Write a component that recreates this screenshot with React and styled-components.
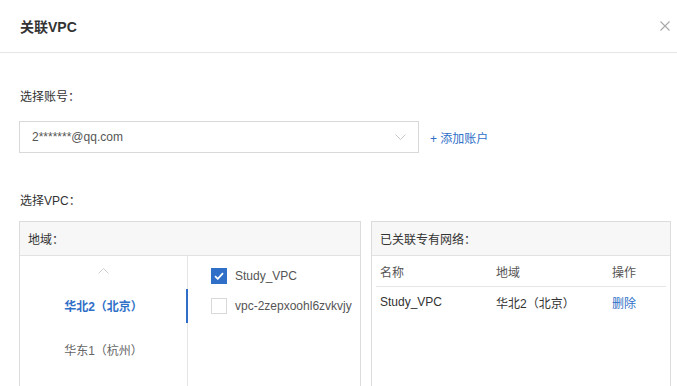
import React from "react";
import styled, { createGlobalStyle } from "styled-components";

const Global = createGlobalStyle`
  html, body { margin: 0; padding: 0; background: #fff; }
  body {
    font-family: "Liberation Sans", "Noto Sans CJK SC", sans-serif;
    font-size: 12px;
    color: #333;
    overflow: hidden;
  }
  * { box-sizing: border-box; }
`;

const Dialog = styled.div`
  width: 677px;
  height: 386px;
  overflow: hidden;
  background: #fff;
`;

const Header = styled.div`
  height: 53px;
  padding: 0 6px 0 20px;
  border-bottom: 1px solid #e6e6e6;
  display: flex;
  align-items: center;
  justify-content: space-between;
`;

const Title = styled.h2`
  margin: 0;
  font-size: 14px;
  font-weight: 700;
  color: #333;
`;

const CloseBtn = styled.button`
  border: 0;
  background: none;
  padding: 0;
  width: 12px;
  height: 12px;
  display: flex;
  align-items: center;
  justify-content: center;
  cursor: pointer;
`;

const Body = styled.div`
  padding: 36px 0 0 19px;
`;

const Label = styled.div`
  font-size: 12px;
  line-height: 16px;
  color: #333;
  padding-left: 1px;
`;

const AccountRow = styled.div`
  display: flex;
  align-items: center;
  gap: 11px;
  margin-top: 16px;
  margin-bottom: 40px;
`;

const Select = styled.div`
  width: 400px;
  height: 32px;
  border: 1px solid #d9d9d9;
  display: flex;
  align-items: center;
  justify-content: space-between;
  padding: 0 12px;
  color: #555;
  font-size: 12px;
`;

const Link = styled.a`
  color: #2f6fc8;
  font-size: 12px;
  text-decoration: none;
  cursor: pointer;
`;

const Panels = styled.div`
  display: flex;
  gap: 10px;
  margin-top: 12px;
`;

const Panel = styled.div`
  width: ${(p) => p.$w}px;
  height: 200px;
  border: 1px solid #dcdcdc;
  display: flex;
  flex-direction: column;
`;

const PanelHead = styled.div`
  height: 34px;
  background: #f7f7f7;
  border-bottom: 1px solid #e2e2e2;
  display: flex;
  align-items: center;
  padding-left: 8px;
  color: #333;
  font-size: 12px;
`;

const PanelBody = styled.div`
  display: flex;
  flex: 1;
  min-width: 0;
`;

const RegionCol = styled.div`
  width: 168px;
  flex: none;
  border-right: 1px solid #e6e6e6;
  display: flex;
  flex-direction: column;
`;

const ChevronRow = styled.div`
  height: 27px;
  display: flex;
  align-items: center;
  justify-content: center;
  padding-top: 2px;
`;

const RegionItem = styled.div`
  position: relative;
  height: 44px;
  display: flex;
  align-items: center;
  justify-content: center;
  font-size: 12px;
  color: ${(p) => (p.$active ? "#2f6fc8" : "#666")};
  font-weight: ${(p) => (p.$active ? 700 : 400)};
  cursor: pointer;
`;

const ActiveBar = styled.span`
  position: absolute;
  right: -1px;
  top: 6px;
  width: 2px;
  height: 34px;
  background: #2f6fc8;
`;

const VpcList = styled.div`
  flex: 1;
  min-width: 0;
  padding: 5px 0 0 23px;
  overflow: hidden;
`;

const VpcRow = styled.label`
  height: 30px;
  display: flex;
  align-items: center;
  gap: 8px;
  white-space: nowrap;
  color: #555;
  font-size: 12px;
`;

const Box = styled.span`
  flex: none;
  width: 16px;
  height: 16px;
  border: 1px solid ${(p) => (p.$checked ? "#2f6fc8" : "#d9d9d9")};
  background: ${(p) => (p.$checked ? "#2f6fc8" : "#fff")};
  display: flex;
  align-items: center;
  justify-content: center;
`;

const Table = styled.div`
  padding: 0 4px;
`;

const Row = styled.div`
  display: grid;
  grid-template-columns: 116px 116px 1fr;
  height: ${(p) => (p.$head ? 31 : 30)}px;
  align-items: center;
  border-bottom: ${(p) => (p.$head ? "1px solid #e6e6e6" : "0")};
`;

const Cell = styled.div`
  padding-left: 4px;
  font-size: 12px;
  color: ${(p) => (p.$link ? "#2f6fc8" : p.$head ? "#555" : "#333")};
  white-space: nowrap;
  cursor: ${(p) => (p.$link ? "pointer" : "default")};
`;

const XIcon = () => (
  <svg width="10" height="10" viewBox="0 0 10 10">
    <path d="M0.5 0.5 L9.5 9.5 M9.5 0.5 L0.5 9.5" stroke="#a8a8a8" strokeWidth="1.1" fill="none" />
  </svg>
);

const ChevronDown = () => (
  <svg width="11" height="6" viewBox="0 0 11 6">
    <path d="M0.5 0.5 L5.5 5.5 L10.5 0.5" stroke="#c8c8c8" strokeWidth="1" fill="none" />
  </svg>
);

const ChevronUp = () => (
  <svg width="11" height="6" viewBox="0 0 11 6">
    <path d="M0.5 5.5 L5.5 0.5 L10.5 5.5" stroke="#cfcfcf" strokeWidth="1" fill="none" />
  </svg>
);

const Check = () => (
  <svg width="10" height="8" viewBox="0 0 10 8">
    <path d="M1 4.2 L3.8 6.8 L9 1.2" stroke="#fff" strokeWidth="1.8" fill="none" />
  </svg>
);

const regions = [
  { name: "华北2（北京）", active: true },
  { name: "华东1（杭州）", active: false },
];

const vpcs = [
  { name: "Study_VPC", checked: true },
  { name: "vpc-2zepxoohl6zvkvjy", checked: false },
];

export default function App() {
  return (
    <>
      <Global />
      <Dialog>
        <Header>
          <Title>关联VPC</Title>
          <CloseBtn aria-label="close">
            <XIcon />
          </CloseBtn>
        </Header>
        <Body>
          <Label>选择账号：</Label>
          <AccountRow>
            <Select>
              <span>2*******@qq.com</span>
              <ChevronDown />
            </Select>
            <Link>+ 添加账户</Link>
          </AccountRow>
          <Label>选择VPC：</Label>
          <Panels>
            <Panel $w={342}>
              <PanelHead>地域：</PanelHead>
              <PanelBody>
                <RegionCol>
                  <ChevronRow>
                    <ChevronUp />
                  </ChevronRow>
                  {regions.map((r) => (
                    <RegionItem key={r.name} $active={r.active}>
                      {r.name}
                      {r.active && <ActiveBar />}
                    </RegionItem>
                  ))}
                </RegionCol>
                <VpcList>
                  {vpcs.map((v) => (
                    <VpcRow key={v.name}>
                      <Box $checked={v.checked}>{v.checked && <Check />}</Box>
                      {v.name}
                    </VpcRow>
                  ))}
                </VpcList>
              </PanelBody>
            </Panel>
            <Panel $w={300}>
              <PanelHead>已关联专有网络：</PanelHead>
              <Table>
                <Row $head>
                  <Cell $head>名称</Cell>
                  <Cell $head>地域</Cell>
                  <Cell $head>操作</Cell>
                </Row>
                <Row>
                  <Cell>Study_VPC</Cell>
                  <Cell>华北2（北京）</Cell>
                  <Cell $link>删除</Cell>
                </Row>
              </Table>
            </Panel>
          </Panels>
        </Body>
      </Dialog>
    </>
  );
}
